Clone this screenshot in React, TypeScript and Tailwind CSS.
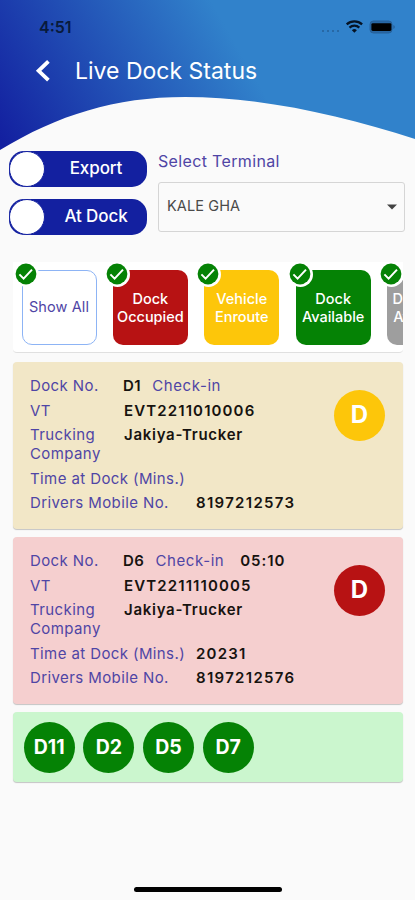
import { useState } from 'react';

const filters = [
  { id: 'all', label: ['Show All'], box: 'bg-white border border-[#8db4f5] text-[#4f45a5] font-normal tracking-[0.1px] pb-[1px]' },
  { id: 'occupied', label: ['Dock', 'Occupied'], box: 'bg-[#b71213] text-white font-medium' },
  { id: 'enroute', label: ['Vehicle', 'Enroute'], box: 'bg-[#fdc60a] text-white font-medium' },
  { id: 'available', label: ['Dock', 'Available'], box: 'bg-[#058205] text-white font-medium' },
  { id: 'unavailable', label: ['Dock Not', 'Available'], box: 'bg-[#9e9e9e] text-white font-medium' },
];

const docks = [
  {
    dock: 'D1',
    checkIn: '',
    vt: 'EVT2211010006',
    company: 'Jakiya-Trucker',
    time: '',
    mobile: '8197212573',
    card: 'bg-[#f2e7c7]',
    badge: 'bg-[#fdc60a]',
  },
  {
    dock: 'D6',
    checkIn: '05:10',
    vt: 'EVT2211110005',
    company: 'Jakiya-Trucker',
    time: '20231',
    mobile: '8197212576',
    card: 'bg-[#f5cfcf]',
    badge: 'bg-[#b71213]',
  },
];

const freeDocks = ['D11', 'D2', 'D5', 'D7'];

function Toggle({ label }: { label: string }) {
  const [on, setOn] = useState(false);

  return (
    <button
      onClick={() => setOn(!on)}
      className={`flex h-[36px] w-[138px] items-center rounded-[15px] bg-[#1320a0] ${on ? 'flex-row-reverse' : ''}`}
    >
      <span className="h-[36px] w-[36px] shrink-0 rounded-full border border-[#1320a0] bg-white" />
      <span className="flex-1 text-center text-[17px] font-medium tracking-[-0.1px] text-white">{label}</span>
    </button>
  );
}

function CheckBadge() {
  return (
    <svg className="absolute -left-[8px] -top-[8px]" width="25" height="25" viewBox="0 0 25 25">
      <circle cx="12.5" cy="12.5" r="12.5" fill="#fff" />
      <circle cx="12" cy="12" r="10.4" fill="#058205" />
      <path d="M5.4 12.4l4.2 4.2 8.4-9" fill="none" stroke="#fff" strokeWidth="2" />
    </svg>
  );
}

export default function App() {
  return (
    <div className="relative flex h-[900px] w-[415px] flex-col overflow-hidden bg-[#fafafa] font-['Inter',sans-serif]">
      <svg className="absolute left-0 top-0" width="415" height="152" viewBox="0 0 415 152">
        <defs>
          <linearGradient id="sky" gradientUnits="userSpaceOnUse" x1="0" y1="138" x2="218" y2="13">
            <stop offset="0" stopColor="#1320a0" />
            <stop offset="1" stopColor="#3182cb" />
          </linearGradient>
        </defs>
        <path d="M0 0H415V139C340 115 260 97 185 97C115 97 58 115 0 150Z" fill="url(#sky)" />
      </svg>

      <div className="relative flex h-[54px] items-center justify-between pl-[39px] pr-[19px]">
        <span className="text-[16px] font-semibold leading-none text-[#081a3c]">4:51</span>
        <svg width="76" height="16" viewBox="0 0 76 16">
          <g fill="#245f98">
            <circle cx="3" cy="12" r="1" />
            <circle cx="8" cy="12" r="1" />
            <circle cx="13" cy="12" r="1" />
            <circle cx="18" cy="12" r="1" />
          </g>
          <g fill="none" stroke="#061324" strokeWidth="2.3">
            <path d="M26.7 5.4A11.4 11.4 0 0 1 42.1 5.4" />
            <path d="M29.5 8.6A7.3 7.3 0 0 1 39.3 8.6" />
          </g>
          <path d="M34.4 13.8L31.9 11.2A3.5 3.5 0 0 1 36.9 11.2Z" fill="#061324" />
          <rect x="50" y="2" width="22" height="12" rx="3.4" fill="#2867a4" stroke="#27619a" />
          <rect x="51.4" y="4.2" width="20" height="7.8" rx="1.4" fill="#000" />
          <path d="M73.4 6v4c1.8-.6 1.8-3.4 0-4z" fill="#245f98" />
        </svg>
      </div>

      <div className="relative flex h-[34px] items-center pl-[35px]">
        <svg width="16" height="22" viewBox="0 0 16 22">
          <path d="M13.4 1.4L3.6 10.8L13.4 20.2" fill="none" stroke="#fff" strokeWidth="3.8" />
        </svg>
        <h1 className="pl-[24px] text-[23px] leading-none text-white">Live Dock Status</h1>
      </div>

      <div className="relative mt-[63px] flex gap-[11px] pl-[9px]">
        <div className="flex flex-col gap-[12px]">
          <Toggle label="Export" />
          <Toggle label="At Dock" />
        </div>
        <div>
          <p className="h-[31px] text-[16px] leading-[20px] tracking-[0.35px] text-[#4f45a5]">Select Terminal</p>
          <div className="flex h-[50px] w-[247px] items-center justify-between rounded-[3px] border border-[#d5d5d5] pl-[8px] pr-[7px]">
            <span className="pb-[2px] text-[14.5px] tracking-[0.1px] text-[#4a4a4a]">KALE GHA</span>
            <svg width="10" height="6" viewBox="0 0 10 6">
              <path d="M0 .5H10L5 5.5Z" fill="#424242" />
            </svg>
          </div>
        </div>
      </div>

      <div className="relative ml-[13px] mr-[12px] mt-[27px] flex h-[91px] shrink-0 gap-[16.4px] overflow-hidden rounded-b-[4px] border-b border-[#e0e0e0] bg-white pl-[8.5px] pt-[8px]">
        {filters.map((f) => (
          <div key={f.id} className="relative h-[75px] w-[75px] shrink-0">
            <div
              className={`flex h-full w-full flex-col items-center justify-center rounded-[10px] text-center text-[14.5px] leading-[18px] ${f.box}`}
            >
              {f.label.map((line) => (
                <span key={line} className="whitespace-nowrap">
                  {line}
                </span>
              ))}
            </div>
            <CheckBadge />
          </div>
        ))}
      </div>

      <div className="mt-[9px] flex flex-col gap-[8px] pl-[13px] pr-[12px]">
        {docks.map((d) => (
          <div
            key={d.dock}
            className={`flex h-[167px] justify-between rounded-[4px] pl-[17px] pr-[18px] pt-[14px] shadow-[0_1px_1px_rgba(0,0,0,0.22)] ${d.card}`}
          >
            <div className="flex flex-col gap-[5.5px] whitespace-nowrap text-[15px] leading-[19px] tracking-[0.4px] text-[#4f45a5]">
              <div className="flex">
                <span className="w-[93px]">Dock No.</span>
                <b className="font-semibold tracking-[0.5px] text-[#17130f]">{d.dock}</b>
                <span className="pl-[11px] tracking-[0.6px]">Check-in</span>
                <b className="pl-[16px] font-semibold tracking-[0.9px] text-[#17130f]">{d.checkIn}</b>
              </div>
              <div className="flex">
                <span className="w-[94px]">VT</span>
                <b className="font-semibold tracking-[1.12px] text-[#17130f]">{d.vt}</b>
              </div>
              <div className="flex">
                <span className="w-[94px] whitespace-normal">Trucking Company</span>
                <b className="font-semibold tracking-[0.72px] text-[#17130f]">{d.company}</b>
              </div>
              <div className="flex">
                <span className="w-[166px]">Time at Dock (Mins.)</span>
                <b className="font-semibold tracking-[1.2px] text-[#17130f]">{d.time}</b>
              </div>
              <div className="flex">
                <span className="w-[166px]">Drivers Mobile No.</span>
                <b className="font-semibold tracking-[1.3px] text-[#17130f]">{d.mobile}</b>
              </div>
            </div>
            <div
              className={`mt-[13.5px] flex h-[51px] w-[51px] items-center justify-center rounded-full text-[24px] font-bold text-white ${d.badge}`}
            >
              D
            </div>
          </div>
        ))}

        <div className="flex h-[70px] gap-[8.7px] rounded-[4px] bg-[#cbf6ce] pl-[10.7px] pt-[10px] shadow-[0_1px_1px_rgba(0,0,0,0.22)]">
          {freeDocks.map((name) => (
            <div
              key={name}
              className="flex h-[51px] w-[51px] items-center justify-center rounded-full bg-[#058205] text-[19.5px] font-bold text-white"
            >
              {name}
            </div>
          ))}
        </div>
      </div>

      <div className="mx-auto mb-[8px] mt-auto h-[5px] w-[148px] rounded-full bg-black" />
    </div>
  );
}
